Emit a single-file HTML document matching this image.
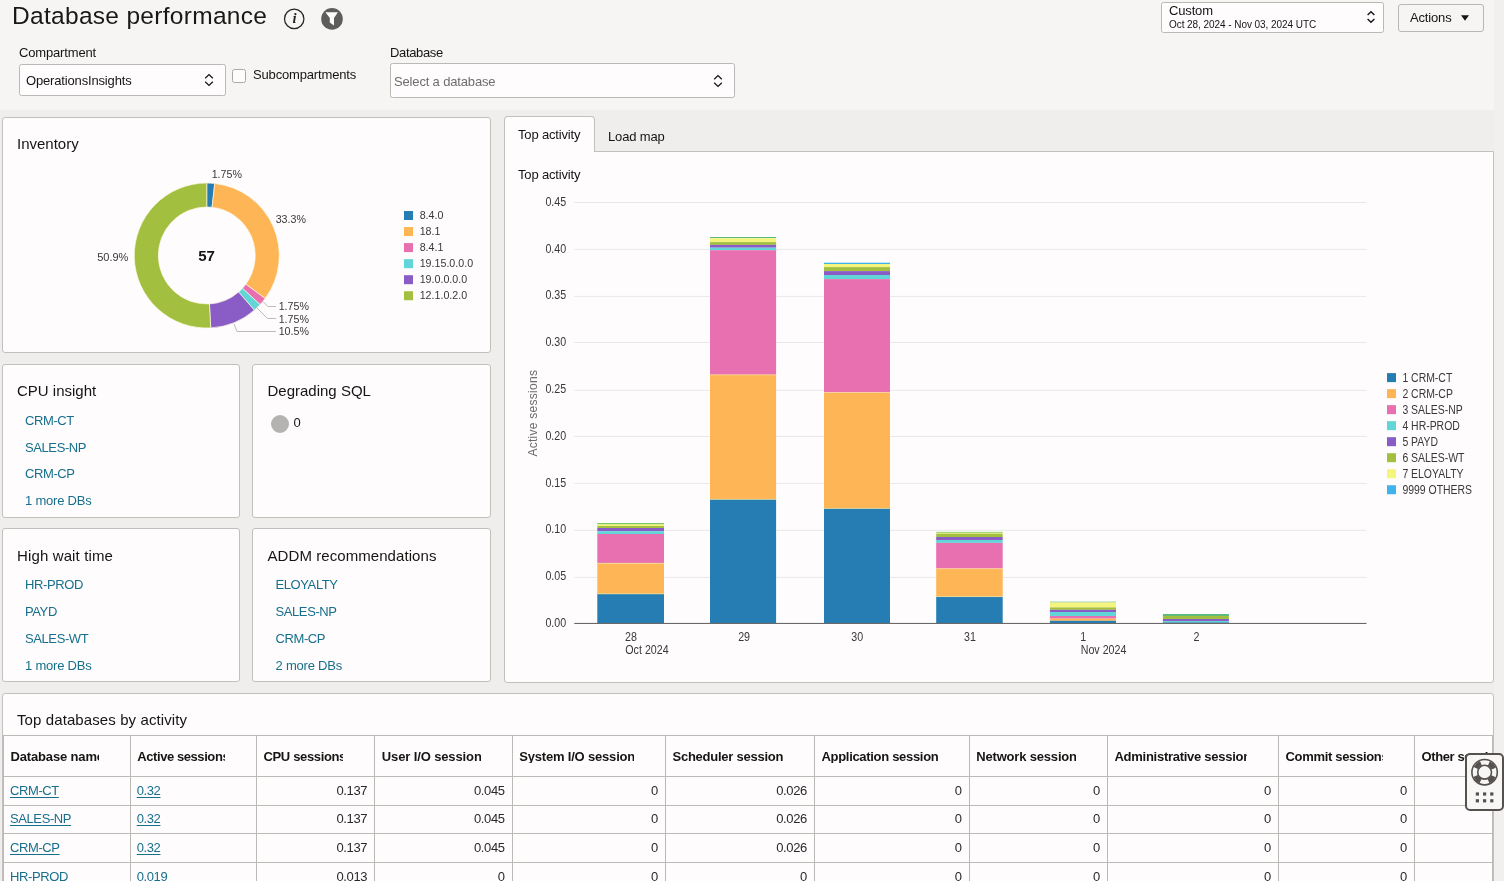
<!DOCTYPE html>
<html lang="en">
<head>
<meta charset="utf-8">
<title>Database performance</title>
<style>
*{box-sizing:border-box;margin:0;padding:0}
html,body{width:1504px;height:881px;overflow:hidden}
body{will-change:transform;background:#f0eeec;font-family:"Liberation Sans",sans-serif;color:#161513;position:relative;font-size:13px}
.abs{position:absolute}
.t{position:absolute;white-space:nowrap;line-height:1}
#hdr{position:absolute;left:0;top:0;width:1494px;height:110px;background:#f6f5f3}
#rstrip{position:absolute;left:1494px;top:0;width:10px;height:881px;background:#f2f0ef}
.card{position:absolute;background:#fefcfd;border:1px solid #c2bfbd;border-radius:3px}
.sel{position:absolute;background:#fefcfd;border:1px solid #bbb8b5;border-radius:2.5px}
.h15{font-size:15px;color:#161513}
.lnk{font-size:13px;color:#176f8c;letter-spacing:-0.4px}
.lbl{font-size:13px;color:#161513;letter-spacing:-0.16px}
.th{font-size:13px;font-weight:bold;color:#161513;letter-spacing:-0.3px}
.u{text-decoration:underline;text-underline-offset:1.5px;text-decoration-thickness:1px}
.num{color:#2b2927;letter-spacing:-0.35px}
</style>
</head>
<body>
<div id="hdr"></div>
<div id="rstrip"></div>

<!-- ===== header ===== -->
<div class="t" id="title" style="left:12px;top:3.6px;font-size:24.5px;letter-spacing:0.3px;color:#1a1816">Database performance</div>
<svg class="abs" style="left:282px;top:7px" width="64" height="24" viewBox="282 7 64 24">
  <circle cx="294.2" cy="18.9" r="9.7" fill="none" stroke="#262423" stroke-width="1.25"/>
  <text x="294.4" y="23.2" font-family="Liberation Serif" font-style="italic" font-weight="bold" font-size="14.5" text-anchor="middle" fill="#262423">i</text>
  <circle cx="332" cy="18.9" r="10.8" fill="#5f5d5c"/>
  <path d="M325.4 12.3 H337.9 L334 18 V25.4 L329.8 22.4 V18 Z" fill="#fdfcfc"/>
</svg>

<div class="t lbl" id="lcomp" style="left:19px;top:46px">Compartment</div>
<div class="sel" style="left:19px;top:64px;width:207px;height:32px"></div>
<div class="t lbl" id="vcomp" style="left:26px;top:74px">OperationsInsights</div>
<svg class="abs" style="left:203px;top:72px" width="12" height="16" viewBox="0 0 12 16"><path d="M2.2 6.2 L6 2.6 L9.8 6.2 M2.2 9.8 L6 13.4 L9.8 9.8" fill="none" stroke="#161513" stroke-width="1.3"/></svg>
<div class="abs" style="left:232px;top:69px;width:14px;height:14px;border:1px solid #aaa7a4;border-radius:2.5px;background:#fdfcfc"></div>
<div class="t lbl" id="lsub" style="left:253px;top:68.4px">Subcompartments</div>

<div class="t lbl" id="ldb" style="left:390px;top:46px;letter-spacing:-0.36px">Database</div>
<div class="sel" style="left:390px;top:63px;width:345px;height:35px"></div>
<div class="t lbl" id="vdb" style="left:394px;top:75px;color:#6f6d6b">Select a database</div>
<svg class="abs" style="left:712px;top:73px" width="12" height="16" viewBox="0 0 12 16"><path d="M2.2 6.2 L6 2.6 L9.8 6.2 M2.2 9.8 L6 13.4 L9.8 9.8" fill="none" stroke="#161513" stroke-width="1.3"/></svg>

<div class="sel" style="left:1161px;top:2px;width:223px;height:31px"></div>
<div class="t lbl" id="vcus" style="left:1169px;top:4px">Custom</div>
<div class="t" id="vdate" style="left:1169px;top:20px;font-size:10px;letter-spacing:-0.06px;color:#161513">Oct 28, 2024 - Nov 03, 2024 UTC</div>
<svg class="abs" style="left:1365px;top:9px" width="12" height="16" viewBox="0 0 12 16"><path d="M2.6 6 L6 2.8 L9.4 6 M2.6 10 L6 13.2 L9.4 10" fill="none" stroke="#161513" stroke-width="1.4"/></svg>
<div class="abs" style="left:1398px;top:4px;width:86px;height:28px;border:1px solid #b9b6b3;border-radius:3px;background:#f6f5f3"></div>
<div class="t lbl" id="vact" style="left:1410px;top:11px">Actions</div>
<svg class="abs" style="left:1460px;top:14px" width="10" height="8" viewBox="0 0 10 8"><path d="M1 1.2 H9 L5 6.8 Z" fill="#161513"/></svg>

<!-- ===== cards ===== -->
<div class="card" id="c-inv" style="left:2px;top:117px;width:489px;height:236px"></div>
<div class="card" id="c-cpu" style="left:2px;top:364px;width:238px;height:154px"></div>
<div class="card" id="c-deg" style="left:252px;top:364px;width:239px;height:154px"></div>
<div class="card" id="c-hwt" style="left:2px;top:528px;width:238px;height:154px"></div>
<div class="card" id="c-addm" style="left:252px;top:528px;width:239px;height:154px"></div>

<!--INV-->
<div class="t h15" id="tinv" style="left:17px;top:136px">Inventory</div>
<!--INVSVG-->
<svg class="abs" style="left:0;top:110px" width="495" height="250" viewBox="0 110 495 250" font-family="Liberation Sans, sans-serif"><path d="M206.75 183.00 A72.5 72.5 0 0 1 214.73 183.44 L212.09 207.29 A48.5 48.5 0 0 0 206.75 207.00 Z" fill="#267db3" stroke="#fdf6e0" stroke-width="0.7"/><path d="M214.73 183.44 A72.5 72.5 0 0 1 265.17 298.44 L245.83 284.22 A48.5 48.5 0 0 0 212.09 207.29 Z" fill="#fdb555" stroke="#fdf6e0" stroke-width="0.7"/><path d="M265.17 298.44 A72.5 72.5 0 0 1 260.09 304.60 L242.43 288.35 A48.5 48.5 0 0 0 245.83 284.22 Z" fill="#e86fb0" stroke="#fdf6e0" stroke-width="0.7"/><path d="M260.09 304.60 A72.5 72.5 0 0 1 254.36 310.17 L238.60 292.07 A48.5 48.5 0 0 0 242.43 288.35 Z" fill="#62d5d8" stroke="#fdf6e0" stroke-width="0.7"/><path d="M254.36 310.17 A72.5 72.5 0 0 1 210.74 327.89 L209.42 303.93 A48.5 48.5 0 0 0 238.60 292.07 Z" fill="#8a5dc6" stroke="#fdf6e0" stroke-width="0.7"/><path d="M210.74 327.89 A72.5 72.5 0 1 1 206.75 183.00 L206.75 207.00 A48.5 48.5 0 1 0 209.42 303.93 Z" fill="#a2bf40" stroke="#fdf6e0" stroke-width="0.7"/><g fill="none" stroke="#bdbab8" stroke-width="1"><path d="M263 301.5 L268 306.5 H276"/><path d="M256.5 307.5 L267.5 318.5 H276"/><path d="M234 324 L237 331.5 H276"/></g><text x="211.7" y="178.1" font-size="11" fill="#3a3836" text-anchor="start" textLength="30.25" lengthAdjust="spacingAndGlyphs">1.75%</text><text x="275.7" y="223.1" font-size="11" fill="#3a3836" text-anchor="start" textLength="30.25" lengthAdjust="spacingAndGlyphs">33.3%</text><text x="97.2" y="261.4" font-size="11" fill="#3a3836" text-anchor="start" textLength="31.19" lengthAdjust="spacingAndGlyphs">50.9%</text><text x="278.7" y="310.3" font-size="11" fill="#3a3836" text-anchor="start" textLength="30.25" lengthAdjust="spacingAndGlyphs">1.75%</text><text x="278.7" y="323.2" font-size="11" fill="#3a3836" text-anchor="start" textLength="30.25" lengthAdjust="spacingAndGlyphs">1.75%</text><text x="278.7" y="334.7" font-size="11" fill="#3a3836" text-anchor="start" textLength="30.25" lengthAdjust="spacingAndGlyphs">10.5%</text><text x="206.5" y="261.3" font-size="15" font-weight="bold" fill="#161513" text-anchor="middle">57</text><rect x="404" y="211.00" width="9" height="9" fill="#267db3"/><text x="419.7" y="219.2" font-size="11" fill="#3a3836" text-anchor="start" textLength="23.73" lengthAdjust="spacingAndGlyphs">8.4.0</text><rect x="404" y="227.05" width="9" height="9" fill="#fdb555"/><text x="419.7" y="235.25" font-size="11" fill="#3a3836" text-anchor="start" textLength="20.76" lengthAdjust="spacingAndGlyphs">18.1</text><rect x="404" y="243.10" width="9" height="9" fill="#e86fb0"/><text x="419.7" y="251.3" font-size="11" fill="#3a3836" text-anchor="start" textLength="23.73" lengthAdjust="spacingAndGlyphs">8.4.1</text><rect x="404" y="259.15" width="9" height="9" fill="#62d5d8"/><text x="419.7" y="267.35" font-size="11" fill="#3a3836" text-anchor="start" textLength="53.39" lengthAdjust="spacingAndGlyphs">19.15.0.0.0</text><rect x="404" y="275.20" width="9" height="9" fill="#8a5dc6"/><text x="419.7" y="283.4" font-size="11" fill="#3a3836" text-anchor="start" textLength="47.46" lengthAdjust="spacingAndGlyphs">19.0.0.0.0</text><rect x="404" y="291.25" width="9" height="9" fill="#a2bf40"/><text x="419.7" y="299.45" font-size="11" fill="#3a3836" text-anchor="start" textLength="47.46" lengthAdjust="spacingAndGlyphs">12.1.0.2.0</text></svg>
<!--/INVSVG-->
<!--/INV-->
<!--SMALLCARDS-->
<div class="t h15" id="tcpu" style="left:17px;top:383px">CPU insight</div>
<div class="t lnk" style="left:25px;top:414px">CRM-CT</div>
<div class="t lnk" style="left:25px;top:440.5px">SALES-NP</div>
<div class="t lnk" style="left:25px;top:467.2px">CRM-CP</div>
<div class="t lnk" style="left:25px;top:494px;letter-spacing:-0.22px">1 more DBs</div>

<div class="t h15" id="tdeg" style="left:267.5px;top:383px">Degrading SQL</div>
<div class="abs" style="left:271px;top:415px;width:18px;height:18px;border-radius:50%;background:#b5b3b2"></div>
<div class="t lbl" style="left:293.5px;top:416px">0</div>

<div class="t h15" id="thwt" style="left:17px;top:547.5px;letter-spacing:0.13px">High wait time</div>
<div class="t lnk" style="left:25px;top:578.2px">HR-PROD</div>
<div class="t lnk" style="left:25px;top:605px">PAYD</div>
<div class="t lnk" style="left:25px;top:631.7px">SALES-WT</div>
<div class="t lnk" style="left:25px;top:658.5px;letter-spacing:-0.22px">1 more DBs</div>

<div class="t h15" id="taddm" style="left:267.5px;top:547.5px;letter-spacing:0.07px">ADDM recommendations</div>
<div class="t lnk" style="left:275.5px;top:578.2px">ELOYALTY</div>
<div class="t lnk" style="left:275.5px;top:605px">SALES-NP</div>
<div class="t lnk" style="left:275.5px;top:631.7px">CRM-CP</div>
<div class="t lnk" style="left:275.5px;top:658.5px;letter-spacing:-0.22px">2 more DBs</div>
<!--/SMALLCARDS-->
<!--CHART-->
<div class="abs" id="panel" style="left:504px;top:151px;width:990px;height:532px;background:#fefcfd;border:1px solid #c2bfbd;border-radius:0 0 3px 3px"></div>
<div class="abs" id="tab1" style="left:504px;top:116px;width:91px;height:36px;background:#fefcfd;border:1px solid #c2bfbd;border-bottom:none;border-radius:4px 4px 0 0"></div>
<div class="t lbl" id="ttab1" style="left:518px;top:128px">Top activity</div>
<div class="t lbl" id="ttab2" style="left:608px;top:130.3px">Load map</div>
<div class="t lbl" id="ttop" style="left:518px;top:168.3px">Top activity</div>
<!--CHARTSVG-->
<svg class="abs" style="left:505px;top:152px" width="988" height="530" viewBox="505 152 988 530" font-family="Liberation Sans, sans-serif"><text x="566.2" y="627.1" font-size="12" fill="#3a3836" text-anchor="end" textLength="20.78" lengthAdjust="spacingAndGlyphs">0.00</text><rect x="574.25" y="576.90" width="792.25" height="1" fill="#eae8e7"/><text x="566.2" y="580.28" font-size="12" fill="#3a3836" text-anchor="end" textLength="20.78" lengthAdjust="spacingAndGlyphs">0.05</text><rect x="574.25" y="529.80" width="792.25" height="1" fill="#eae8e7"/><text x="566.2" y="533.46" font-size="12" fill="#3a3836" text-anchor="end" textLength="20.78" lengthAdjust="spacingAndGlyphs">0.10</text><rect x="574.25" y="482.90" width="792.25" height="1" fill="#eae8e7"/><text x="566.2" y="486.64" font-size="12" fill="#3a3836" text-anchor="end" textLength="20.78" lengthAdjust="spacingAndGlyphs">0.15</text><rect x="574.25" y="435.90" width="792.25" height="1" fill="#eae8e7"/><text x="566.2" y="439.82" font-size="12" fill="#3a3836" text-anchor="end" textLength="20.78" lengthAdjust="spacingAndGlyphs">0.20</text><rect x="574.25" y="389.80" width="792.25" height="1" fill="#eae8e7"/><text x="566.2" y="393.0" font-size="12" fill="#3a3836" text-anchor="end" textLength="20.78" lengthAdjust="spacingAndGlyphs">0.25</text><rect x="574.25" y="342.00" width="792.25" height="1" fill="#eae8e7"/><text x="566.2" y="346.18" font-size="12" fill="#3a3836" text-anchor="end" textLength="20.78" lengthAdjust="spacingAndGlyphs">0.30</text><rect x="574.25" y="295.90" width="792.25" height="1" fill="#eae8e7"/><text x="566.2" y="299.36" font-size="12" fill="#3a3836" text-anchor="end" textLength="20.78" lengthAdjust="spacingAndGlyphs">0.35</text><rect x="574.25" y="248.90" width="792.25" height="1" fill="#eae8e7"/><text x="566.2" y="252.54" font-size="12" fill="#3a3836" text-anchor="end" textLength="20.78" lengthAdjust="spacingAndGlyphs">0.40</text><rect x="574.25" y="202.00" width="792.25" height="1" fill="#eae8e7"/><text x="566.2" y="205.72" font-size="12" fill="#3a3836" text-anchor="end" textLength="20.78" lengthAdjust="spacingAndGlyphs">0.45</text><rect x="597.3" y="523.1" width="66.70" height="1.40" fill="#74c450"/><rect x="597.3" y="524.5" width="66.70" height="1.50" fill="#f5f57e"/><rect x="597.3" y="526" width="66.70" height="2.00" fill="#a2bf40"/><rect x="597.3" y="528" width="66.70" height="3.20" fill="#8a5dc6"/><rect x="597.3" y="531.2" width="66.70" height="2.80" fill="#62d5d8"/><rect x="597.3" y="534" width="66.70" height="29.30" fill="#e86fb0"/><rect x="597.3" y="563.3" width="66.70" height="30.60" fill="#fdb555"/><rect x="597.3" y="593.9" width="66.70" height="29.50" fill="#267db3"/><rect x="597.3" y="562.85" width="66.70" height="0.8" fill="#fbe9a0" opacity="0.85"/><rect x="597.3" y="593.45" width="66.70" height="0.8" fill="#fbe9a0" opacity="0.85"/><rect x="710" y="237" width="66.10" height="1.20" fill="#5fb97a"/><rect x="710" y="238.2" width="66.10" height="3.90" fill="#f5f57e"/><rect x="710" y="242.1" width="66.10" height="2.80" fill="#a2bf40"/><rect x="710" y="244.9" width="66.10" height="2.80" fill="#8a5dc6"/><rect x="710" y="247.7" width="66.10" height="2.50" fill="#62d5d8"/><rect x="710" y="250.2" width="66.10" height="124.70" fill="#e86fb0"/><rect x="710" y="374.9" width="66.10" height="124.40" fill="#fdb555"/><rect x="710" y="499.3" width="66.10" height="124.10" fill="#267db3"/><rect x="710" y="374.45" width="66.10" height="0.8" fill="#fbe9a0" opacity="0.85"/><rect x="710" y="498.85" width="66.10" height="0.8" fill="#fbe9a0" opacity="0.85"/><rect x="824" y="262.7" width="66.00" height="1.30" fill="#3fb3ec"/><rect x="824" y="264" width="66.00" height="3.10" fill="#f5f57e"/><rect x="824" y="267.1" width="66.00" height="4.00" fill="#a2bf40"/><rect x="824" y="271.1" width="66.00" height="3.90" fill="#8a5dc6"/><rect x="824" y="275" width="66.00" height="4.10" fill="#62d5d8"/><rect x="824" y="279.1" width="66.00" height="113.60" fill="#e86fb0"/><rect x="824" y="392.7" width="66.00" height="115.70" fill="#fdb555"/><rect x="824" y="508.4" width="66.00" height="115.00" fill="#267db3"/><rect x="824" y="392.25" width="66.00" height="0.8" fill="#fbe9a0" opacity="0.85"/><rect x="824" y="507.95" width="66.00" height="0.8" fill="#fbe9a0" opacity="0.85"/><rect x="936.2" y="531.9" width="66.50" height="0.90" fill="#74c450"/><rect x="936.2" y="532.8" width="66.50" height="0.90" fill="#f5f57e"/><rect x="936.2" y="533.7" width="66.50" height="3.30" fill="#a2bf40"/><rect x="936.2" y="537" width="66.50" height="3.00" fill="#8a5dc6"/><rect x="936.2" y="540" width="66.50" height="2.90" fill="#62d5d8"/><rect x="936.2" y="542.9" width="66.50" height="25.90" fill="#e86fb0"/><rect x="936.2" y="568.8" width="66.50" height="27.90" fill="#fdb555"/><rect x="936.2" y="596.7" width="66.50" height="26.70" fill="#267db3"/><rect x="936.2" y="568.35" width="66.50" height="0.8" fill="#fbe9a0" opacity="0.85"/><rect x="936.2" y="596.25" width="66.50" height="0.8" fill="#fbe9a0" opacity="0.85"/><rect x="1049.9" y="601.7" width="66.10" height="0.80" fill="#5fb97a"/><rect x="1049.9" y="602.5" width="66.10" height="4.90" fill="#f5f57e"/><rect x="1049.9" y="607.4" width="66.10" height="2.40" fill="#a2bf40"/><rect x="1049.9" y="609.8" width="66.10" height="2.20" fill="#8a5dc6"/><rect x="1049.9" y="612" width="66.10" height="4.00" fill="#62d5d8"/><rect x="1049.9" y="616" width="66.10" height="2.60" fill="#e86fb0"/><rect x="1049.9" y="618.6" width="66.10" height="2.20" fill="#fdb555"/><rect x="1049.9" y="620.8" width="66.10" height="2.60" fill="#267db3"/><rect x="1162.9" y="614" width="66.00" height="2.00" fill="#5fb97a"/><rect x="1162.9" y="616" width="66.00" height="3.00" fill="#a2bf40"/><rect x="1162.9" y="619" width="66.00" height="2.00" fill="#8a5dc6"/><rect x="1162.9" y="621" width="66.00" height="1.40" fill="#62d5d8"/><rect x="1162.9" y="622.4" width="66.00" height="1.00" fill="#267db3"/><rect x="574.25" y="622.9" width="792.25" height="1.1" fill="#6b6967"/><text x="630.9" y="640.8" font-size="12" fill="#3a3836" text-anchor="middle" textLength="11.88" lengthAdjust="spacingAndGlyphs">28</text><text x="744.1" y="640.8" font-size="12" fill="#3a3836" text-anchor="middle" textLength="11.88" lengthAdjust="spacingAndGlyphs">29</text><text x="857.2" y="640.8" font-size="12" fill="#3a3836" text-anchor="middle" textLength="11.88" lengthAdjust="spacingAndGlyphs">30</text><text x="970" y="640.8" font-size="12" fill="#3a3836" text-anchor="middle" textLength="11.88" lengthAdjust="spacingAndGlyphs">31</text><text x="1083.3" y="640.8" font-size="12" fill="#3a3836" text-anchor="middle" textLength="5.94" lengthAdjust="spacingAndGlyphs">1</text><text x="1196.5" y="640.8" font-size="12" fill="#3a3836" text-anchor="middle" textLength="5.94" lengthAdjust="spacingAndGlyphs">2</text><text x="625.3" y="653.6" font-size="12" fill="#3a3836" text-anchor="start" textLength="43.34" lengthAdjust="spacingAndGlyphs">Oct 2024</text><text x="1080.7" y="653.6" font-size="12" fill="#3a3836" text-anchor="start" textLength="45.72" lengthAdjust="spacingAndGlyphs">Nov 2024</text><text transform="translate(537.2 413.2) rotate(-90)" font-size="12" letter-spacing="0.27" fill="#6e6c6a" text-anchor="middle">Active sessions</text><rect x="1387" y="373.10" width="9" height="9" fill="#267db3"/><text x="1402.4" y="381.8" font-size="12" fill="#3a3836" text-anchor="start" textLength="49.87" lengthAdjust="spacingAndGlyphs">1 CRM-CT</text><rect x="1387" y="389.12" width="9" height="9" fill="#fdb555"/><text x="1402.4" y="397.82" font-size="12" fill="#3a3836" text-anchor="start" textLength="50.46" lengthAdjust="spacingAndGlyphs">2 CRM-CP</text><rect x="1387" y="405.14" width="9" height="9" fill="#e86fb0"/><text x="1402.4" y="413.84" font-size="12" fill="#3a3836" text-anchor="start" textLength="60.35" lengthAdjust="spacingAndGlyphs">3 SALES-NP</text><rect x="1387" y="421.16" width="9" height="9" fill="#62d5d8"/><text x="1402.4" y="429.86" font-size="12" fill="#3a3836" text-anchor="start" textLength="57.42" lengthAdjust="spacingAndGlyphs">4 HR-PROD</text><rect x="1387" y="437.18" width="9" height="9" fill="#8a5dc6"/><text x="1402.4" y="445.88" font-size="12" fill="#3a3836" text-anchor="start" textLength="35.59" lengthAdjust="spacingAndGlyphs">5 PAYD</text><rect x="1387" y="453.20" width="9" height="9" fill="#a2bf40"/><text x="1402.4" y="461.9" font-size="12" fill="#3a3836" text-anchor="start" textLength="62.07" lengthAdjust="spacingAndGlyphs">6 SALES-WT</text><rect x="1387" y="469.22" width="9" height="9" fill="#f5f57e"/><text x="1402.4" y="477.92" font-size="12" fill="#3a3836" text-anchor="start" textLength="61.12" lengthAdjust="spacingAndGlyphs">7 ELOYALTY</text><rect x="1387" y="485.24" width="9" height="9" fill="#3fb3ec"/><text x="1402.4" y="493.94" font-size="12" fill="#3a3836" text-anchor="start" textLength="69.63" lengthAdjust="spacingAndGlyphs">9999 OTHERS</text></svg>
<!--/CHARTSVG-->
<!--/CHART-->
<!--TABLE-->
<div class="card" id="c-tbl" style="left:2px;top:693px;width:1492px;height:200px;border-radius:3px 3px 0 0"></div>
<div class="t h15" id="ttbl" style="left:17px;top:712px;letter-spacing:0.1px">Top databases by activity</div>
<div class="abs" style="left:3px;top:735px;width:1490px;height:1px;background:#bcb9b7"></div>
<div class="abs" style="left:3px;top:775.5px;width:1490px;height:1px;background:#bcb9b7"></div>
<div class="abs" style="left:3px;top:804.6px;width:1490px;height:1px;background:#bcb9b7"></div>
<div class="abs" style="left:3px;top:833.1px;width:1490px;height:1px;background:#bcb9b7"></div>
<div class="abs" style="left:3px;top:861.9px;width:1490px;height:1px;background:#bcb9b7"></div>
<div class="abs" style="left:3.00px;top:735px;width:1px;height:150px;background:#bcb9b7"></div>
<div class="abs" style="left:129.75px;top:735px;width:1px;height:150px;background:#bcb9b7"></div>
<div class="abs" style="left:256.00px;top:735px;width:1px;height:150px;background:#bcb9b7"></div>
<div class="abs" style="left:374.25px;top:735px;width:1px;height:150px;background:#bcb9b7"></div>
<div class="abs" style="left:511.75px;top:735px;width:1px;height:150px;background:#bcb9b7"></div>
<div class="abs" style="left:665.00px;top:735px;width:1px;height:150px;background:#bcb9b7"></div>
<div class="abs" style="left:814.00px;top:735px;width:1px;height:150px;background:#bcb9b7"></div>
<div class="abs" style="left:968.75px;top:735px;width:1px;height:150px;background:#bcb9b7"></div>
<div class="abs" style="left:1107.00px;top:735px;width:1px;height:150px;background:#bcb9b7"></div>
<div class="abs" style="left:1278.00px;top:735px;width:1px;height:150px;background:#bcb9b7"></div>
<div class="abs" style="left:1414.00px;top:735px;width:1px;height:150px;background:#bcb9b7"></div>
<div class="abs" style="left:1492.00px;top:735px;width:1px;height:150px;background:#bcb9b7"></div>
<div class="t th" style="left:10.50px;top:749.5px;width:88.25px;overflow:hidden;letter-spacing:-0.15px">Database name</div>
<div class="t th" style="left:137.25px;top:749.5px;width:87.75px;overflow:hidden;letter-spacing:-0.42px">Active sessions</div>
<div class="t th" style="left:263.50px;top:749.5px;width:79.75px;overflow:hidden;letter-spacing:-0.35px">CPU sessions</div>
<div class="t th" style="left:381.75px;top:749.5px;width:99.00px;overflow:hidden;letter-spacing:-0.12px">User I/O sessions</div>
<div class="t th" style="left:519.25px;top:749.5px;width:114.75px;overflow:hidden;letter-spacing:-0.19px">System I/O sessions</div>
<div class="t th" style="left:672.50px;top:749.5px;width:110.50px;overflow:hidden;letter-spacing:-0.25px">Scheduler sessions</div>
<div class="t th" style="left:821.50px;top:749.5px;width:116.25px;overflow:hidden;letter-spacing:-0.31px">Application sessions</div>
<div class="t th" style="left:976.25px;top:749.5px;width:99.75px;overflow:hidden;letter-spacing:-0.18px">Network sessions</div>
<div class="t th" style="left:1114.50px;top:749.5px;width:132.50px;overflow:hidden;letter-spacing:-0.27px">Administrative sessions</div>
<div class="t th" style="left:1285.50px;top:749.5px;width:97.50px;overflow:hidden;letter-spacing:-0.32px">Commit sessions</div>
<div class="t th" style="left:1421.50px;top:749.5px;width:71.00px;overflow:hidden;letter-spacing:-0.4px">Other sessions</div>
<div class="t lnk u" style="left:10.00px;top:783.80px">CRM-CT</div>
<div class="t lnk u" style="left:136.75px;top:783.80px">0.32</div>
<div class="t lbl num" style="right:1136.75px;top:783.80px">0.137</div>
<div class="t lbl num" style="right:999.25px;top:783.80px">0.045</div>
<div class="t lbl num" style="right:846.00px;top:783.80px">0</div>
<div class="t lbl num" style="right:697.00px;top:783.80px">0.026</div>
<div class="t lbl num" style="right:542.25px;top:783.80px">0</div>
<div class="t lbl num" style="right:404.00px;top:783.80px">0</div>
<div class="t lbl num" style="right:233.00px;top:783.80px">0</div>
<div class="t lbl num" style="right:97.00px;top:783.80px">0</div>
<div class="t lnk u" style="left:10.00px;top:812.20px">SALES-NP</div>
<div class="t lnk u" style="left:136.75px;top:812.20px">0.32</div>
<div class="t lbl num" style="right:1136.75px;top:812.20px">0.137</div>
<div class="t lbl num" style="right:999.25px;top:812.20px">0.045</div>
<div class="t lbl num" style="right:846.00px;top:812.20px">0</div>
<div class="t lbl num" style="right:697.00px;top:812.20px">0.026</div>
<div class="t lbl num" style="right:542.25px;top:812.20px">0</div>
<div class="t lbl num" style="right:404.00px;top:812.20px">0</div>
<div class="t lbl num" style="right:233.00px;top:812.20px">0</div>
<div class="t lbl num" style="right:97.00px;top:812.20px">0</div>
<div class="t lnk u" style="left:10.00px;top:841.00px">CRM-CP</div>
<div class="t lnk u" style="left:136.75px;top:841.00px">0.32</div>
<div class="t lbl num" style="right:1136.75px;top:841.00px">0.137</div>
<div class="t lbl num" style="right:999.25px;top:841.00px">0.045</div>
<div class="t lbl num" style="right:846.00px;top:841.00px">0</div>
<div class="t lbl num" style="right:697.00px;top:841.00px">0.026</div>
<div class="t lbl num" style="right:542.25px;top:841.00px">0</div>
<div class="t lbl num" style="right:404.00px;top:841.00px">0</div>
<div class="t lbl num" style="right:233.00px;top:841.00px">0</div>
<div class="t lbl num" style="right:97.00px;top:841.00px">0</div>
<div class="t lnk u" style="left:10.00px;top:869.60px">HR-PROD</div>
<div class="t lnk u" style="left:136.75px;top:869.60px">0.019</div>
<div class="t lbl num" style="right:1136.75px;top:869.60px">0.013</div>
<div class="t lbl num" style="right:999.25px;top:869.60px">0</div>
<div class="t lbl num" style="right:846.00px;top:869.60px">0</div>
<div class="t lbl num" style="right:697.00px;top:869.60px">0</div>
<div class="t lbl num" style="right:542.25px;top:869.60px">0</div>
<div class="t lbl num" style="right:404.00px;top:869.60px">0</div>
<div class="t lbl num" style="right:233.00px;top:869.60px">0</div>
<div class="t lbl num" style="right:97.00px;top:869.60px">0</div>
<!--/TABLE-->
<!--WIDGET-->
<div class="abs" style="left:1464.5px;top:752.5px;width:39.5px;height:58.5px;background:#f8f7f6;border:2px solid #54514e;border-radius:5px"></div>
<svg class="abs" style="left:1468px;top:756px" width="34" height="52" viewBox="1468 756 34 52">
  <circle cx="1484.6" cy="772.2" r="12.7" fill="none" stroke="#54514e" stroke-width="1.6"/>
  <circle cx="1484.6" cy="772.2" r="6.9" fill="none" stroke="#54514e" stroke-width="1.6"/>
  <circle cx="1484.6" cy="772.2" r="9.8" fill="none" stroke="#54514e" stroke-width="4.6" stroke-dasharray="7.2 8.194" stroke-dashoffset="-4.1"/>
  <g fill="#54514e">
    <rect x="1475.8" y="792.4" width="3.2" height="3.2"/><rect x="1483" y="792.4" width="3.2" height="3.2"/><rect x="1490.2" y="792.4" width="3.2" height="3.2"/>
    <rect x="1475.8" y="799.2" width="3.2" height="3.2"/><rect x="1483" y="799.2" width="3.2" height="3.2"/><rect x="1490.2" y="799.2" width="3.2" height="3.2"/>
  </g>
</svg>
<!--/WIDGET-->
</body>
</html>
